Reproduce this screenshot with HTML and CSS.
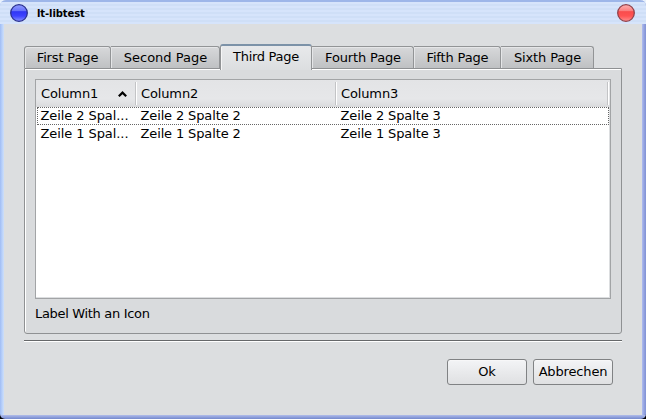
FILE: index.html
```html
<!DOCTYPE html>
<html lang="de">
<head>
<meta charset="utf-8">
<title>lt-libtest</title>
<link rel="stylesheet" href="styles.css">
</head>
<body>
<div class="window">
  <header class="titlebar">
    <svg class="orb" viewBox="0 0 20 20" width="20" height="20">
      <defs>
        <linearGradient id="blue" x1="0" y1="0" x2="0" y2="1"><stop offset="0" stop-color="#8f9cff"/><stop offset=".36" stop-color="#6873fa"/><stop offset=".42" stop-color="#3037f4"/><stop offset=".68" stop-color="#3d43ff"/><stop offset="1" stop-color="#8792ff"/></linearGradient>
      </defs>
      <circle cx="10" cy="10" r="8.3" fill="url(#blue)" stroke="#2a318f" stroke-width="1.3"/>
    </svg>
    <h1 class="title">lt-libtest</h1>
    <svg class="orb" viewBox="0 0 20 20" width="20" height="20">
      <defs>
        <linearGradient id="red" x1="0" y1="0" x2="0" y2="1"><stop offset="0" stop-color="#ffb0b0"/><stop offset=".36" stop-color="#fa8080"/><stop offset=".42" stop-color="#f94c4c"/><stop offset=".68" stop-color="#ff5353"/><stop offset="1" stop-color="#ff9090"/></linearGradient>
      </defs>
      <circle cx="10" cy="10" r="8.3" fill="url(#red)" stroke="#91434c" stroke-width="1.3"/>
    </svg>
  </header>
  <main class="content">
    <nav class="tabs">
      <div class="tab t1">First Page</div>
      <div class="tab t2">Second Page</div>
      <div class="tab t3 active">Third Page</div>
      <div class="tab t4">Fourth Page</div>
      <div class="tab t5">Fifth Page</div>
      <div class="tab t6">Sixth Page</div>
    </nav>
    <section class="panel">
      <div class="list">
        <div class="row head">
          <div class="cell">Column1
            <svg class="sort" viewBox="0 0 9 6" width="9" height="6"><path d="M.8 5.2 4.5 1.6 8.2 5.2" fill="none" stroke="#000" stroke-width="2.2"/></svg>
          </div>
          <div class="cell">Column2</div>
          <div class="cell">Column3</div>
        </div>
        <div class="row focus"><div class="cell">Zeile 2 Spal...</div><div class="cell">Zeile 2 Spalte 2</div><div class="cell">Zeile 2 Spalte 3</div></div>
        <div class="row"><div class="cell">Zeile 1 Spal...</div><div class="cell">Zeile 1 Spalte 2</div><div class="cell">Zeile 1 Spalte 3</div></div>
      </div>
      <div class="label">Label With an Icon</div>
    </section>
    <hr class="rule">
    <footer class="actions">
      <button class="button">Ok</button>
      <button class="button">Abbrechen</button>
    </footer>
  </main>
</div>
</body>
</html>
```
FILE: styles.css
```css
* { box-sizing: border-box; }
html { background: #000; }
body {
  margin: 0;
  width: 646px;
  height: 419px;
  overflow: hidden;
  font: 13px/16px "DejaVu Sans", sans-serif;
  color: #000;
  background: linear-gradient(#e8f1fc 50%, #000 50%);
}
.window {
  width: 646px;
  height: 419px;
  border-radius: 6px 6px 5px 5px;
  overflow: hidden;
  padding: 0 4px 4px;
  background:
    linear-gradient(#b1bdea, #91a1dc 50%, #7388cc) 0 100% / 100% 4px no-repeat,
    linear-gradient(90deg, #a0bcf4, #b7d0fa 50%, #cfdff8) 0 0 / 4px 100% no-repeat,
    linear-gradient(90deg, #b1bef0, #94a3e0 50%, #8192d4) 100% 0 / 4px 100% no-repeat,
    #dcdee0;
}
.titlebar {
  display: flex;
  align-items: center;
  height: 24px;
  margin: 0 -4px;
  padding: 0 10px 0 9px;
  border-top: 2px solid #9db6e9;
  background: repeating-linear-gradient(#d6e4fb 0 2px, #cfdff7 2px 4px);
}
.orb { flex: none; }
.title {
  flex: 1;
  margin: 0 0 0 8px;
  font-size: 10px;
  line-height: 14px;
  font-weight: bold;
  letter-spacing: -.1px;
  padding-top: 1px;
}
.content { padding: 20px 20px 0; }
.tabs {
  display: flex;
  align-items: flex-end;
  height: 25px;
  margin-bottom: -1px;
}
.tab {
  height: 22px;
  margin-bottom: 1px;
  padding: 3px 0 0 1px;
  line-height: 16px;
  text-align: center;
  letter-spacing: -.15px;
  border: 1px solid #929496;
  border-left-width: 0;
  border-bottom-width: 0;
  border-radius: 0 3px 0 0;
  background: linear-gradient(#d7d8da, #bfc1c3);
  box-shadow: inset 1px 1px #e5e6e8;
}
.t1 { width: 87px; padding-left: 0; border-left-width: 1px; border-radius: 3px 3px 0 0; }
.t2 { width: 109px; letter-spacing: 0; }
.t3 { width: 92px; }
.t4 { width: 102px; }
.t5 { width: 87px; }
.t6 { width: 93px; }
.tab.active {
  position: relative;
  height: 26px;
  margin-bottom: -1px;
  padding: 3px 0 0;
  letter-spacing: -.3px;
  border-top: 2px solid #7c92a8;
  border-left: 1px solid #929496;
  border-bottom: 0;
  border-radius: 3px 3px 0 0;
  background: linear-gradient(#e8e9eb, #dcdee0);
  box-shadow: inset 1px 0 #f6f6f7;
}
.panel {
  height: 266px;
  padding: 10px;
  border: 1px solid #8f9193;
  border-radius: 0 0 3px 3px;
  background: #d9dbdd;
  box-shadow: inset 1px 1px #fff;
}
.list {
  height: 220px;
  border: 1px solid #a2a4a6;
  background: #fff;
  box-shadow: inset -1px -1px #dcdee0;
}
.row {
  display: grid;
  grid-template-columns: 100px 200px 1fr;
  width: 572px;
  height: 18px;
  margin-left: 1px;
  border: 1px solid transparent;
  line-height: 16px;
  letter-spacing: -.13px;
}
.cell { padding-left: 2.5px; white-space: nowrap; }
.row .cell:first-child { padding-left: 2.5px; letter-spacing: -.08px; }
.row.focus { border: 1px dotted #666; }
.row.head {
  grid-template-columns: 101px 200px 1fr;
  width: auto;
  height: 27px;
  margin: 0;
  padding-right: 1px;
  border: 0;
  background: linear-gradient(#e3e4e6, #e6e7e9 70%, #d9dadc);
}
.head .cell,
.head .cell:first-child {
  display: flex;
  align-items: center;
  justify-content: space-between;
  height: 23px;
  margin-top: 2px;
  padding: 0 9px 0 4px;
  letter-spacing: -.13px;
  border-right: 1px solid #fff;
  box-shadow: inset -1px 0 #c3c4c6;
}
.head .cell:first-child { padding-left: 5px; }
.row:not(.head) { position: relative; }
.label { padding-top: 7px; letter-spacing: -.32px; }
.rule { height: 2px; margin: 6px 0 0; border: 0; background: linear-gradient(#66686a 50%, #fff 50%); }
.actions { display: flex; justify-content: flex-end; gap: 6px; padding: 17px 9px 0 0; }
.button {
  width: 80px;
  height: 26px;
  padding: 0;
  font: inherit;
  letter-spacing: -.15px;
  color: inherit;
  border: 1px solid #808284;
  border-radius: 3px;
  background: linear-gradient(#f3f4f6, #dfe0e2);
  box-shadow: inset 0 1px #f7f7f8;
}
```
